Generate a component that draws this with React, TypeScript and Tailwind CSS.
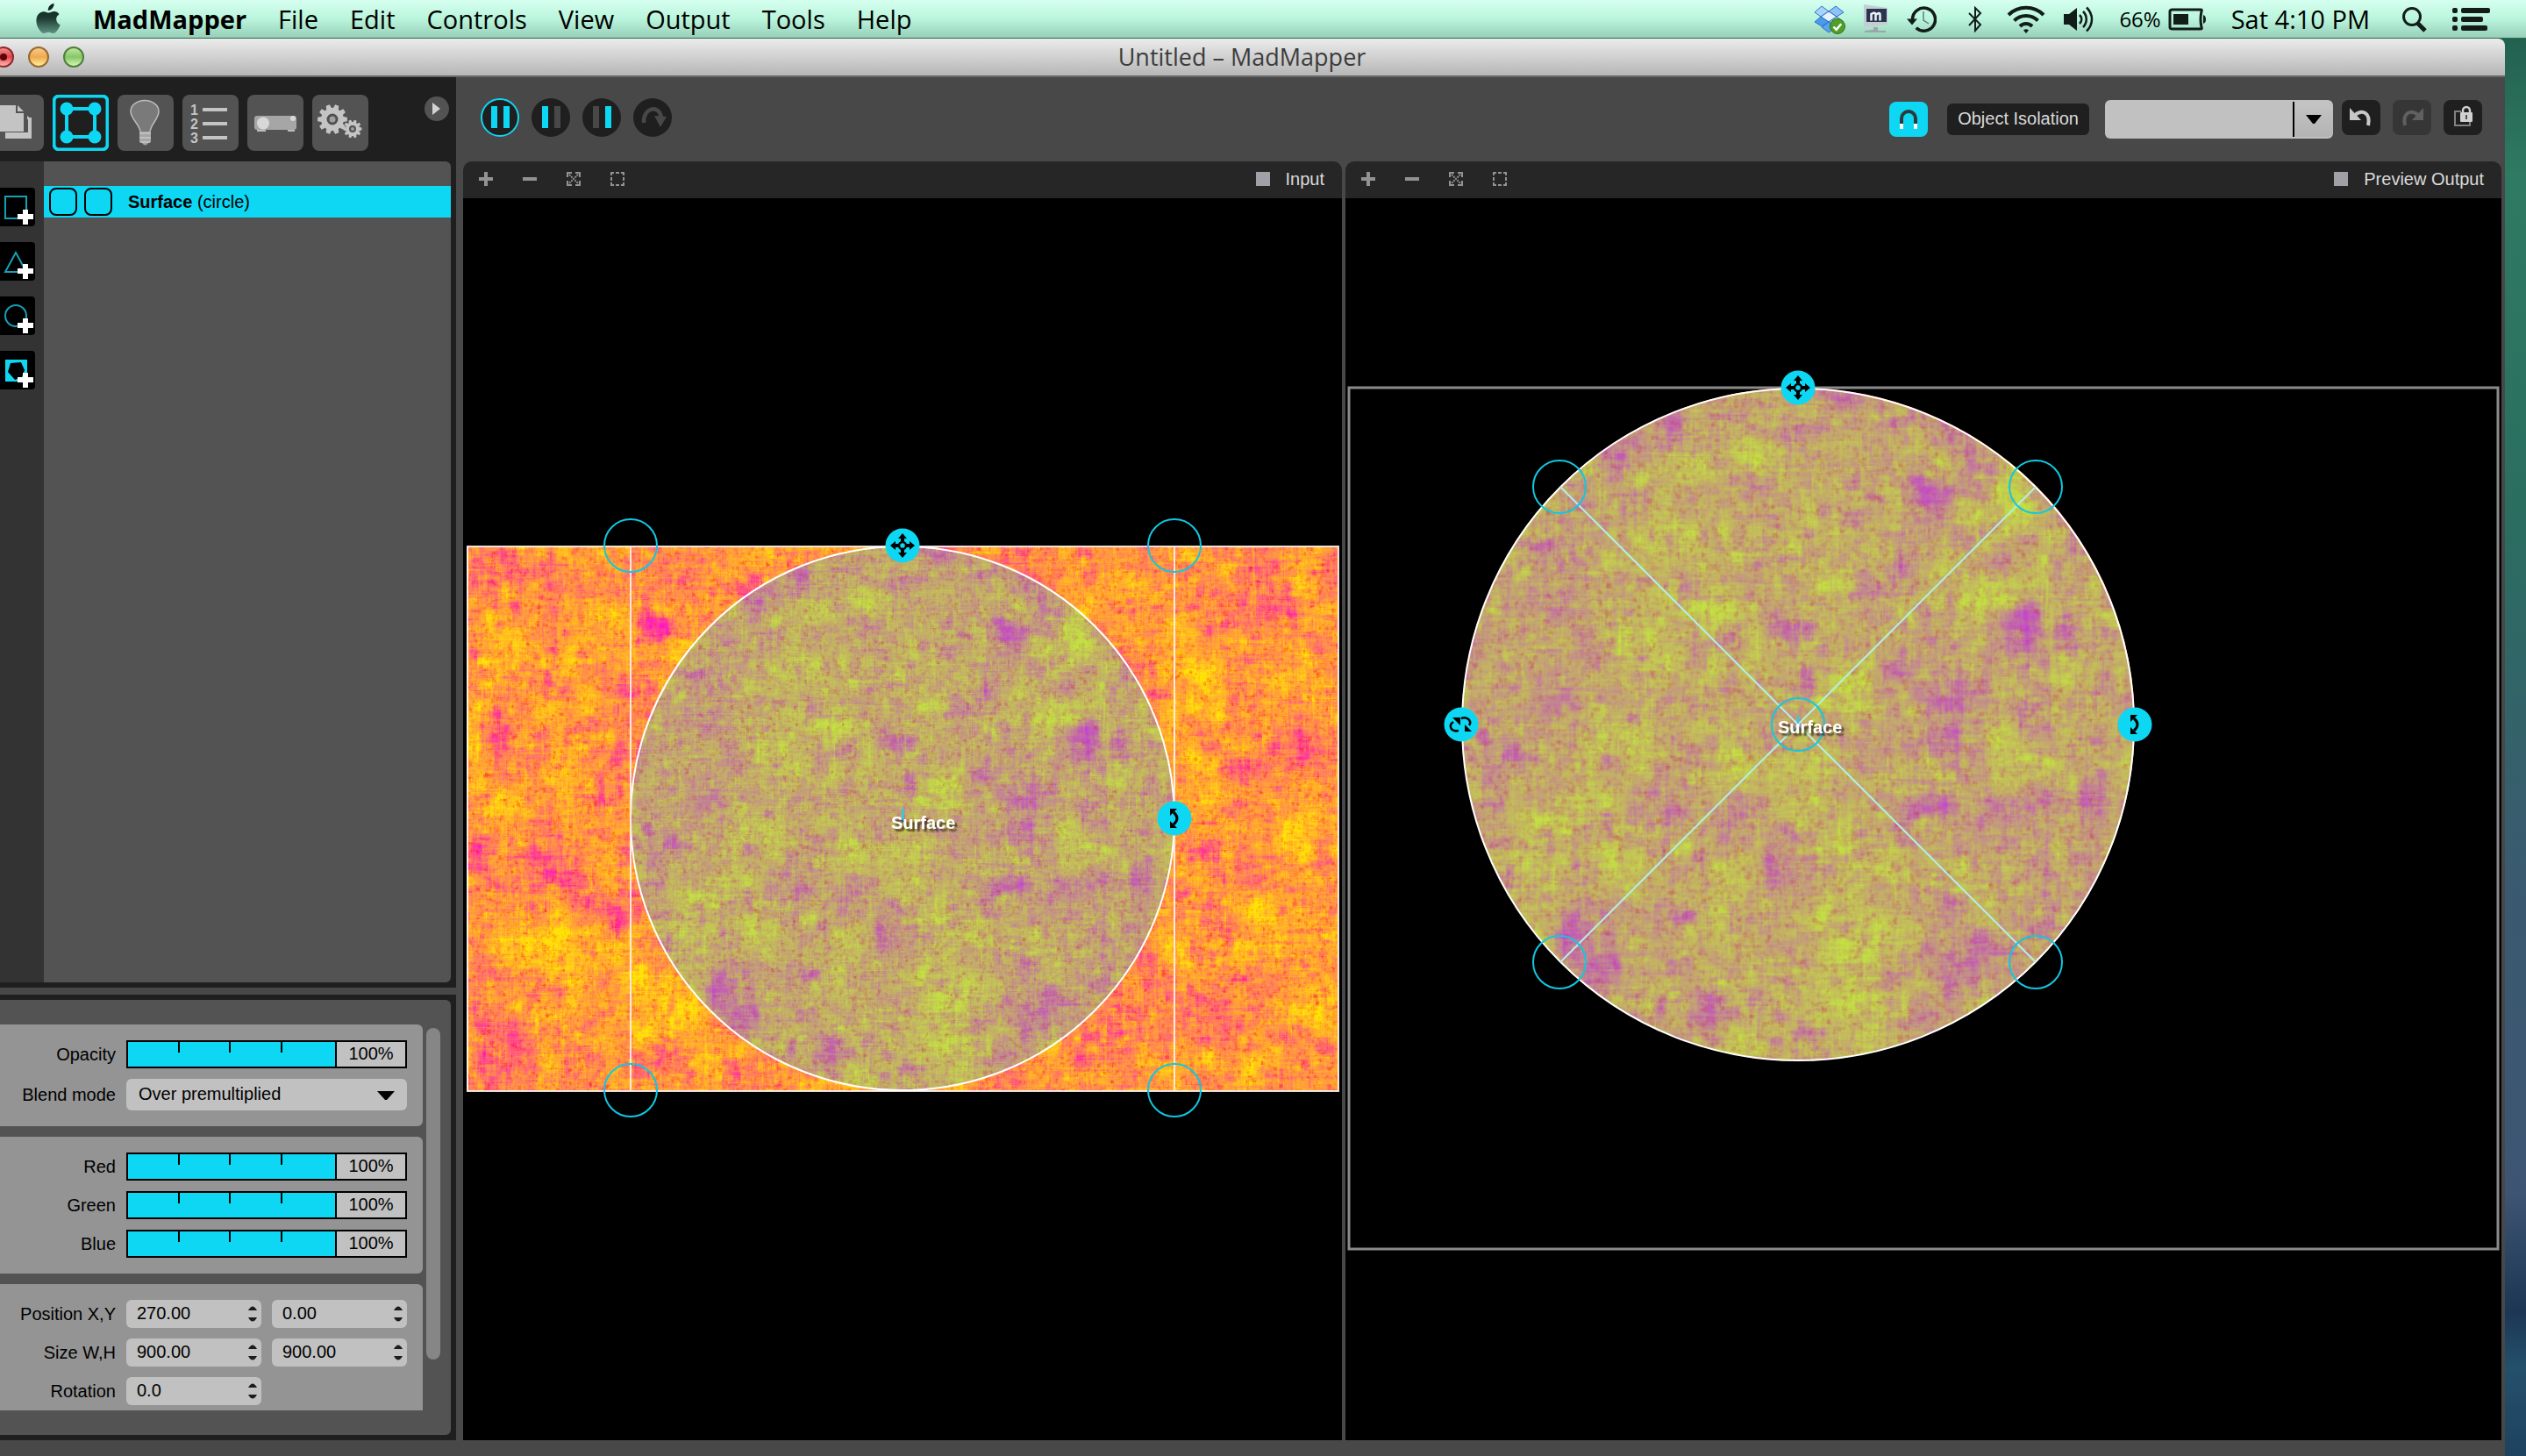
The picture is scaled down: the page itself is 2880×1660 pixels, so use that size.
import React, { useEffect, useId, useRef } from "react";

/* ---------- texture ---------- */

const TEX_W = 994;
const TEX_H = 621;

// [x, y, width, height, strength]; negative strength leans to magenta, positive to yellow
const BLOBS: number[][] = [
  [518, -2, 38, 26, -1], [376, 22, 18, 26, -0.9], [306, 46, 38, 26, -0.9], [597, 77, 40, 58, -1],
  [678, 205, 48, 48, -1], [736, 205, 28, 36, -0.8], [474, 204, 34, 30, -0.8], [224, 326, 24, 18, -0.8],
  [338, 373, 54, 36, -0.6], [596, 378, 50, 18, -0.9], [622, 322, 24, 36, -0.7], [706, 366, 28, 32, -0.7],
  [756, 356, 30, 50, -0.8], [395, 414, 14, 34, -0.8], [462, 418, 18, 44, -0.8], [290, 524, 44, 34, -1],
  [280, 486, 18, 34, -0.9], [400, 556, 32, 40, -0.8], [620, 284, 34, 16, -0.8], [258, 284, 34, 18, -0.6],
  [304, 342, 34, 18, -0.6], [384, 176, 24, 20, -0.7], [498, 256, 14, 32, -0.8], [204, 80, 34, 28, -1],
  [162, 406, 36, 40, -1], [826, 338, 30, 22, -1.1], [774, 158, 34, 16, -0.9], [382, 480, 28, 16, -0.8],
  [0, 0, 130, 60, -0.5], [20, 190, 40, 60, -0.7], [0, 320, 40, 60, -0.5], [60, 330, 80, 90, -0.4],
  [10, 540, 60, 70, -0.6], [800, 500, 110, 80, -0.5], [880, 60, 80, 40, -0.6], [946, 200, 40, 50, -0.7],
  [860, 240, 60, 30, -0.6], [180, 10, 100, 50, -0.5], [600, 470, 120, 100, -0.35], [220, 120, 100, 60, -0.2],
  [560, 10, 100, 40, -0.2], [450, 410, 60, 70, -0.4], [560, 230, 90, 60, -0.3], [180, 560, 60, 40, -0.6],
  [216, 102, 54, 46, 0.6], [330, 216, 62, 56, 0.5], [410, 424, 52, 56, 0.8], [660, 92, 54, 54, 0.5],
  [660, 176, 40, 36, 0.6], [656, 312, 56, 44, 0.6], [540, 400, 66, 60, 0.5], [540, 470, 66, 60, 0.4],
  [514, 552, 56, 38, 0.6], [182, 476, 30, 28, 1.2], [228, 506, 42, 40, 0.9], [188, 544, 28, 30, 0.9],
  [300, 314, 50, 40, 0.6], [290, 372, 50, 32, 0.6], [784, 440, 34, 46, 0.8], [734, 250, 38, 34, 0.6],
  [148, 60, 46, 34, 0.8], [402, 180, 40, 34, 0.6], [308, 414, 60, 48, 0.4], [124, 156, 26, 36, 0.8],
  [366, 60, 54, 28, 0.6], [20, 100, 70, 50, 0.6], [40, 420, 80, 90, 0.7], [90, 240, 60, 60, 0.6],
  [800, 120, 60, 90, 0.5], [860, 400, 90, 80, 0.6], [900, 130, 60, 50, 0.5], [810, 230, 50, 60, 0.5],
  [900, 300, 70, 60, 0.6], [940, 500, 54, 70, 0.6], [720, 30, 60, 40, 0.4], [30, 260, 40, 50, 0.6],
  [470, 330, 60, 50, 0.5], [440, 120, 80, 50, 0.4], [380, 250, 60, 60, 0.3], [340, 120, 60, 50, 0.4],
];

let cachedTexture: HTMLCanvasElement | null = null;

function buildTexture(): HTMLCanvasElement {
  if (cachedTexture) return cachedTexture;
  let seed = 90210;
  const rnd = () => {
    seed = (seed + 0x6d2b79f5) | 0;
    let t = Math.imul(seed ^ (seed >>> 15), 1 | seed);
    t = (t + Math.imul(t ^ (t >>> 7), 61 | t)) ^ t;
    return ((t ^ (t >>> 14)) >>> 0) / 4294967296;
  };
  const field = new Float32Array(TEX_W * TEX_H);
  const grain = new Float32Array(TEX_W * TEX_H);
  const stamp = (f: Float32Array, x: number, y: number, w: number, h: number, v: number) => {
    const x0 = Math.max(0, x | 0), y0 = Math.max(0, y | 0);
    const x1 = Math.min(TEX_W, (x + w) | 0), y1 = Math.min(TEX_H, (y + h) | 0);
    for (let j = y0; j < y1; j++) for (let i = x0; i < x1; i++) f[j * TEX_W + i] += v;
  };
  const scatter = (f: Float32Array, n: number, wa: number, wb: number, ha: number, hb: number, amp: number) => {
    for (let k = 0; k < n; k++) {
      const w = wa + rnd() * (wb - wa), h = ha + rnd() * (hb - ha);
      stamp(f, rnd() * (TEX_W + w) - w, rnd() * (TEX_H + h) - h, w, h, (rnd() * 2 - 1) * amp);
    }
  };
  scatter(field, 260, 70, 180, 60, 140, 0.02);
  scatter(field, 2200, 12, 40, 12, 40, 0.13);
  scatter(field, 16000, 4, 14, 4, 14, 0.13);
  scatter(field, 12000, 16, 50, 1, 3, 0.075);
  scatter(field, 12000, 1, 3, 16, 50, 0.075);
  scatter(grain, 90000, 2, 5, 2, 5, 0.22);
  for (const [x, y, w, h, s] of BLOBS) {
    for (let k = 0; k < 14; k++) {
      const g = 0.55 + rnd() * 0.6;
      stamp(field, x + (rnd() - 0.5) * w * 0.5 + (w * (1 - g)) / 2, y + (rnd() - 0.5) * h * 0.5 + (h * (1 - g)) / 2, w * g, h * g, s * 0.036);
    }
  }
  const stops = [
    [0, 255, 24, 200], [0.26, 255, 72, 140], [0.46, 255, 124, 96], [0.66, 255, 166, 50], [1, 255, 226, 8],
  ];
  const canvas = document.createElement("canvas");
  canvas.width = TEX_W;
  canvas.height = TEX_H;
  const ctx = canvas.getContext("2d")!;
  const img = ctx.createImageData(TEX_W, TEX_H);
  for (let p = 0; p < field.length; p++) {
    const t = Math.min(1, Math.max(0, 0.61 + field[p] * 0.68 + grain[p] * 0.14));
    let s = 1;
    while (s < stops.length - 1 && t > stops[s][0]) s++;
    const a = stops[s - 1], b = stops[s];
    const u = (t - a[0]) / (b[0] - a[0]);
    const red = Math.max(0, Math.min(0.7, -grain[p] * 0.9));
    img.data[p * 4] = 255;
    img.data[p * 4 + 1] = (a[2] + (b[2] - a[2]) * u) * (1 - red * 0.6);
    img.data[p * 4 + 2] = (a[3] + (b[3] - a[3]) * u) * (1 - red * 0.8);
    img.data[p * 4 + 3] = 255;
  }
  ctx.putImageData(img, 0, 0);
  cachedTexture = canvas;
  return canvas;
}

function Texture({ crop, width, height, className }: { crop: number[]; width: number; height: number; className: string }) {
  const ref = useRef<HTMLCanvasElement>(null);
  useEffect(() => {
    const ctx = ref.current!.getContext("2d")!;
    ctx.drawImage(buildTexture(), crop[0], crop[1], crop[2], crop[3], 0, 0, width, height);
  }, []);
  return <canvas ref={ref} width={width} height={height} className={className} />;
}

/* ---------- menu bar ---------- */

function AppleLogo() {
  return (
    <svg viewBox="0 0 30 36" className="h-9 w-[30px]" aria-hidden="true">
      <defs>
        <linearGradient id="apple" x1="0" y1="0" x2="0" y2="1">
          <stop offset="0" stopColor="#0c1f1a" />
          <stop offset=".5" stopColor="#1d3b33" />
          <stop offset="1" stopColor="#5f9482" />
        </linearGradient>
      </defs>
      <path fill="url(#apple)" d="M21.5 0c.3 2-.6 4-1.8 5.500-1.200 1.400-3.100 2.500-4.900 2.400-.3-1.900.6-3.900 1.700-5.200C17.800 1.200 19.800.2 21.500 0zM27.500 12.200c-2.200 1.400-3.400 3.300-3.300 5.800.1 2.900 1.600 5.100 4.400 6.400-.6 1.800-1.500 3.600-2.700 5.400-1.600 2.400-3.100 4.300-5.300 4.300-2.100 0-2.800-1.300-5.300-1.300s-3.300 1.300-5.300 1.300c-2.200 0-3.800-2.100-5.400-4.500C1.200 24.500.2 17.400 3.200 13c1.800-2.600 4.300-3.800 6.700-3.800 2.300 0 3.900 1.400 5.800 1.400 1.900 0 3.400-1.500 6.200-1.500 2.100 0 4.200 1 5.600 3.100z" />
    </svg>
  );
}

function DropboxIcon() {
  return (
    <svg viewBox="0 0 36 34" className="h-[34px] w-9" aria-hidden="true">
      <g stroke="#2d6fc4" strokeWidth="1" strokeLinejoin="round">
        <path fill="#a8d4fa" d="M9 2l8 6-9 6-7-5z" />
        <path fill="#8cc2f6" d="M25 2l-8 6 9 6 8-5z" />
        <path fill="#e4f2fe" d="M8 14l9-6 9 6-9 6z" />
        <path fill="#4b9bec" d="M8 14l-7 6 8 5 8-5z" />
        <path fill="#a8d4fa" d="M26 14l8 6-9 5-8-5z" />
        <path fill="#58a4ee" d="M9 26l8-6 8 6-8 6z" />
      </g>
      <circle cx="27" cy="25" r="8.500" fill="#4f9f28" stroke="#2f7412" />
      <path d="M22.500 25.500l3.200 3.300 5.500-6.500" fill="none" stroke="#fff" strokeWidth="2.500" />
    </svg>
  );
}

function DisplayIcon() {
  return (
    <svg viewBox="0 0 30 34" className="h-[34px] w-[30px]" aria-hidden="true">
      <path fill="#c4ced2" d="M1 0l27 4v19L1 26z" />
      <path fill="#2b3550" d="M4 5h23v15H4z" />
      <path d="M9.500 18.500V11q5-3 5 1v6.500M14.500 12q5-4 5 0v6.500" fill="none" stroke="#eef2f6" strokeWidth="2.500" />
      <path fill="#9aa6a8" d="M12 26h5v4h9v2H2v-2l10-1z" />
    </svg>
  );
}

function TimeMachineIcon() {
  return (
    <svg viewBox="0 0 34 34" className="size-[34px]" aria-hidden="true" fill="none">
      <path d="M6.500 17a13 13 0 1 1 4.200 9.700" stroke="#121c18" strokeWidth="3.500" />
      <path d="M0 16.500h12l-6 7z" fill="#121c18" />
      <path d="M19 8v10l6 4" stroke="#5c8274" strokeWidth="1.500" />
    </svg>
  );
}

function BluetoothIcon() {
  return (
    <svg viewBox="0 0 16 30" className="h-[30px] w-4" aria-hidden="true" fill="none">
      <path d="M1 8l13 13-6 7V2l6 6L1 22" stroke="#121c18" strokeWidth="2" />
    </svg>
  );
}

function WifiIcon() {
  return (
    <svg viewBox="0 0 44 34" className="h-[34px] w-11" aria-hidden="true" fill="none" stroke="#121c18" strokeWidth="4">
      <path d="M2 12C13 1 31 1 42 12" />
      <path d="M8.500 18.500c7.500-7.500 19.500-7.500 27 0" />
      <path d="M15 25c4-4 10-4 14 0" />
      <path d="M19 29.500a4.500 4.500 0 0 1 6 0L22 33z" fill="#121c18" stroke="none" />
    </svg>
  );
}

function VolumeIcon() {
  return (
    <svg viewBox="0 0 36 34" className="h-[34px] w-9" aria-hidden="true" fill="none" stroke="#121c18" strokeWidth="2.500">
      <path d="M1 11h6l9-7v26l-9-7H1z" fill="#121c18" stroke="none" />
      <path d="M19 12c3 3 3 7 0 10" />
      <path d="M23 8c5 5 5 13 0 18" />
      <path d="M27 3.500c8 8 8 19 0 27" />
    </svg>
  );
}

function BatteryIcon() {
  return (
    <svg viewBox="0 0 44 26" className="h-[26px] w-11" aria-hidden="true">
      <path d="M2 4q0-2 3-2h32q2 0 1 2-2 9 0 18 1 2-1 2H5q-3 0-3-2z" fill="none" stroke="#121c18" strokeWidth="3" />
      <path d="M6 7h17v12H6z" fill="#121c18" />
      <path d="M40 8q3 1 3 5t-3 5z" fill="#121c18" />
    </svg>
  );
}

const MENUS = ["File", "Edit", "Controls", "View", "Output", "Tools", "Help"];

function MenuBar() {
  return (
    <header className="flex h-11 shrink-0 items-center justify-between border-b border-[#2c6b52] bg-linear-to-b from-[#d6fff0] via-[#b9f5dc] to-[#98cfb8] pr-10 pl-10 font-['Open_Sans',sans-serif] text-[29px] leading-10 text-black">
      <nav className="flex items-center gap-9">
        <button aria-label="Apple menu"><AppleLogo /></button>
        <button className="font-bold">MadMapper</button>
        {MENUS.map((m) => <button key={m}>{m}</button>)}
      </nav>
      <div className="flex items-center gap-7">
        <div className="flex items-center gap-5 pr-2">
          <DropboxIcon />
          <DisplayIcon />
          <TimeMachineIcon />
        </div>
        <BluetoothIcon />
        <div className="flex items-center gap-5">
          <WifiIcon />
          <VolumeIcon />
        </div>
        <div className="flex items-center gap-2 text-2xl">
          <span>66%</span>
          <BatteryIcon />
        </div>
        <time className="pr-2">Sat 4:10 PM</time>
        <button aria-label="Search">
          <svg viewBox="0 0 30 30" className="size-[30px]" fill="none" stroke="#121c18">
            <circle cx="12" cy="12" r="9.500" strokeWidth="3" />
            <path d="M18 19l9 9" strokeWidth="5" />
          </svg>
        </button>
        <button aria-label="Notification center">
          <svg viewBox="0 0 44 28" className="h-7 w-11" fill="#121c18">
            <rect y="1" width="6" height="6" rx="2" /><rect x="10" y="1" width="33" height="6" rx="2" />
            <rect y="11" width="6" height="6" rx="2" /><rect x="10" y="11" width="25" height="6" rx="2" />
            <rect y="21" width="6" height="6" rx="2" /><rect x="10" y="21" width="30" height="6" rx="2" />
          </svg>
        </button>
      </div>
    </header>
  );
}

function TitleBar() {
  return (
    <div className="relative flex h-11 shrink-0 items-center justify-center rounded-t-lg border-b-2 border-[#686868] bg-linear-to-b from-[#ececec] to-[#b6b6b6]">
      <div className="absolute left-4 flex gap-4">
        <button aria-label="Close" className="grid size-6 place-items-center rounded-full border-2 border-[#8e2a2a] bg-linear-to-b from-[#f08a8a] via-[#e2414a] to-[#ffb4b4]">
          <span className="size-2 rounded-full bg-[#5c0508]" />
        </button>
        <button aria-label="Minimize" className="size-6 rounded-full border-2 border-[#9a6a30] bg-linear-to-b from-[#f7c98a] via-[#f0a94c] to-[#fff09a]" />
        <button aria-label="Zoom" className="size-6 rounded-full border-2 border-[#4e7f3a] bg-linear-to-b from-[#bce6a2] via-[#86c765] to-[#d5f7b5]" />
      </div>
      <h1 className="font-['Open_Sans',sans-serif] text-[27px] leading-9 text-[#3c3c3c]">Untitled – MadMapper</h1>
    </div>
  );
}

/* ---------- left column ---------- */

function PagesIcon() {
  return (
    <svg viewBox="0 0 64 64" className="size-16">
      <path fill="#c4c4c4" d="M20 50V43h26V26h4v24z" />
      <path fill="#c4c4c4" d="M8 12h24v9h9v21H8z" />
      <path fill="#c4c4c4" d="M34 12l7 7h-7zM45 24l5 4h-5z" />
    </svg>
  );
}

function SurfaceIcon() {
  return (
    <svg viewBox="0 0 64 64" className="size-16">
      <rect x="1.500" y="1.500" width="61" height="61" rx="6" fill="#1f1f1f" stroke="#0dd7f3" strokeWidth="4" />
      <rect x="16" y="16" width="32" height="32" fill="none" stroke="#0dd7f3" strokeWidth="4" />
      <g fill="#0dd7f3"><circle cx="16" cy="16" r="7.500" /><circle cx="48" cy="16" r="7.500" /><circle cx="16" cy="48" r="7.500" /><circle cx="48" cy="48" r="7.500" /></g>
    </svg>
  );
}

function BulbIcon() {
  return (
    <svg viewBox="0 0 64 64" className="size-16">
      <path d="M26 43c0-9-11-15-11-24a16 12.500 0 0 1 32 0c0 9-10 15-10 24z" fill="#7a7a7a" stroke="#bcbcbc" strokeWidth="1.500" />
      <path d="M25 44h13v10l-3 1q-3.500 5-7 0l-3-1z" fill="#a6a6a6" />
      <path d="M25 44h13M25 49h13M26 54h11" stroke="#c8c8c8" strokeWidth="1.500" />
    </svg>
  );
}

function ListIcon() {
  return (
    <svg viewBox="0 0 64 64" className="size-16">
      <g fill="#c4c4c4" fontFamily="Liberation Sans, sans-serif" fontWeight="700" fontSize="16">
        <text x="9" y="23">1</text><text x="9" y="39">2</text><text x="9" y="55">3</text>
      </g>
      <path d="M23 17h28M23 33h28M23 49h28" stroke="#c4c4c4" strokeWidth="4" />
    </svg>
  );
}

function ProjectorIcon() {
  return (
    <svg viewBox="0 0 64 64" className="size-16">
      <rect x="8" y="24" width="48" height="16" rx="3" fill="#a6a6a6" />
      <path d="M11 40h10v2H11zM46 40h8v2h-8z" fill="#bcbcbc" />
      <circle cx="18" cy="32.500" r="7" fill="#d8d8d8" />
      <circle cx="52" cy="27" r="3" fill="#d8d8d8" />
    </svg>
  );
}

function gearPath(cx: number, cy: number, r: number, teeth: number) {
  const pts: string[] = [];
  for (let i = 0; i < teeth; i++) {
    const a = (i / teeth) * Math.PI * 2;
    const s = Math.PI / teeth;
    for (const [o, k] of [[-0.75, 0.76], [-0.42, 1], [0.42, 1], [0.75, 0.76]]) {
      pts.push(`${(cx + Math.cos(a + s * o) * r * k).toFixed(1)},${(cy + Math.sin(a + s * o) * r * k).toFixed(1)}`);
    }
  }
  return pts.join(" ");
}

function GearsIcon() {
  return (
    <svg viewBox="0 0 64 64" className="size-16">
      <polygon points={gearPath(23, 28, 17, 10)} fill="#c4c4c4" />
      <circle cx="23" cy="28" r="5" fill="#a0a0a0" stroke="#505050" strokeWidth="3" />
      <polygon points={gearPath(46, 39, 10.5, 10)} fill="#c4c4c4" />
      <circle cx="46" cy="39" r="3" fill="#a0a0a0" stroke="#505050" strokeWidth="2" />
    </svg>
  );
}

const TABS = [
  { label: "Media", icon: <PagesIcon /> },
  { label: "Surfaces", icon: <SurfaceIcon /> },
  { label: "Fixtures", icon: <BulbIcon /> },
  { label: "Cues", icon: <ListIcon /> },
  { label: "Projectors", icon: <ProjectorIcon /> },
  { label: "Preferences", icon: <GearsIcon /> },
];

const SHAPES = [
  { label: "Add quad", shape: <rect x="6" y="10" width="24" height="25" fill="none" stroke="#12a2b8" strokeWidth="2" /> },
  { label: "Add triangle", shape: <path d="M18 12l12 22H6z" fill="none" stroke="#12a2b8" strokeWidth="2" /> },
  { label: "Add circle", shape: <circle cx="18" cy="22" r="12" fill="none" stroke="#12a2b8" strokeWidth="2" /> },
  {
    label: "Add mask",
    shape: (
      <>
        <rect x="6" y="10" width="25" height="25" fill="#0dd7f3" />
        <path d="M12 14l12-1 4 9-3 8-8 3-8-9z" fill="#000" />
      </>
    ),
  },
];

function SurfacesPanel() {
  return (
    <section className="flex min-h-0 flex-1 flex-col bg-[#1f1f1f] pr-1.5 pb-1.5">
      <div className="flex h-24 shrink-0 items-start justify-between pr-0.5">
        <div className="flex gap-2.5 pt-5 pl-2.5">
          {TABS.map((t) => (
            <button key={t.label} aria-label={t.label} className="size-16 rounded-lg bg-[#535353]">{t.icon}</button>
          ))}
        </div>
        <button aria-label="Collapse" className="mt-[22px] grid size-7 place-items-center rounded-full bg-[#535353]">
          <svg viewBox="0 0 10 14" className="h-3.5 w-2.5"><path d="M0 0l9 7-9 7z" fill="#d2d2d2" /></svg>
        </button>
      </div>
      <div className="flex min-h-0 flex-1 overflow-hidden rounded-r-md bg-[#535353]">
        <div className="flex w-[74px] flex-col items-end gap-[18px] bg-[#333] pt-[30px] pr-2.5">
          {SHAPES.map((s) => (
            <button key={s.label} aria-label={s.label} className="h-11 w-10 rounded-r-sm bg-black">
              <svg viewBox="0 0 40 44" className="h-11 w-10">
                {s.shape}
                <path d="M26 25h6v5h6v6h-6v6h-6v-6h-6v-6h6z" fill="#fff" />
              </svg>
            </button>
          ))}
        </div>
        <ul className="flex-1 pt-7">
          <li className="flex h-9 items-center gap-2 bg-[#0dd7f3] pl-1.5 font-['Liberation_Sans',sans-serif] text-xl leading-6 text-black">
            <input type="checkbox" aria-label="Solo" className="size-8 appearance-none rounded-lg border-2 border-black" />
            <input type="checkbox" aria-label="Visible" className="size-8 appearance-none rounded-lg border-2 border-black" />
            <span className="pl-2.5"><b>Surface</b> (circle)</span>
          </li>
        </ul>
      </div>
    </section>
  );
}

function Row({ label, id, children }: { label: string; id: string; children: React.ReactNode }) {
  return (
    <div className="flex items-center gap-3">
      <label htmlFor={id} className="w-[156px] shrink-0 text-right">{label}</label>
      {children}
    </div>
  );
}

function SliderRow({ label }: { label: string }) {
  const id = useId();
  return (
    <Row label={label} id={id}>
      <div className="flex h-8 flex-1 border-2 border-black bg-black">
        <div className="relative flex-1">
          <input id={id} type="range" defaultValue={100} className="block size-full appearance-none bg-[#0dd7f3] [&::-webkit-slider-thumb]:w-0 [&::-webkit-slider-thumb]:appearance-none" />
          <div className="pointer-events-none absolute inset-x-0 top-0 flex h-3 justify-evenly pr-1">
            <i className="w-0.5 bg-black" /><i className="w-0.5 bg-black" /><i className="w-0.5 bg-black" />
          </div>
        </div>
        <output htmlFor={id} className="ml-0.5 w-[78px] bg-[#c1c1c1] text-center leading-[26px]">100%</output>
      </div>
    </Row>
  );
}

function NumberField({ id, label, value }: { id?: string; label?: string; value: string }) {
  return (
    <div className="relative h-8 w-[154px]">
      <input id={id} aria-label={label} defaultValue={value} className="size-full rounded-md bg-[#c1c1c1] pr-8 pb-0.5 pl-3 text-black outline-none" />
      <svg viewBox="0 0 12 20" className="absolute top-1.5 right-1 h-5 w-3" aria-hidden="true">
        <path d="M1 6q5-9 10 0zM1 14q5 9 10 0z" fill="#1c1c1c" />
      </svg>
    </div>
  );
}

function Group({ children }: { children: React.ReactNode }) {
  return <div className="flex shrink-0 flex-col gap-3 rounded-r-md bg-[#949494] py-[18px] pr-[18px]">{children}</div>;
}

function PropertiesPanel() {
  const blend = useId(), px = useId(), sw = useId(), rot = useId();
  return (
    <section className="h-[508px] shrink-0 bg-[#1f1f1f] py-1.5 pr-1.5 font-['Liberation_Sans',sans-serif] text-xl leading-6 text-black">
      <div className="flex h-full gap-1 rounded-r-md bg-[#535353] py-7 pr-3">
        <div className="flex flex-1 flex-col gap-3 overflow-hidden">
          <Group>
            <SliderRow label="Opacity" />
            <Row label="Blend mode" id={blend}>
              <div className="relative h-9 flex-1">
                <select id={blend} className="size-full appearance-none rounded-md bg-[#c1c1c1] pb-0.5 pl-3.5">
                  <option>Over premultiplied</option>
                </select>
                <svg viewBox="0 0 20 10" className="pointer-events-none absolute top-3.5 right-3.5 h-2.5 w-5"><path d="M0 0h20L11 10H9z" fill="#000" /></svg>
              </div>
            </Row>
          </Group>
          <Group>
            <SliderRow label="Red" />
            <SliderRow label="Green" />
            <SliderRow label="Blue" />
          </Group>
          <Group>
            <Row label="Position X,Y" id={px}>
              <NumberField id={px} value="270.00" />
              <NumberField label="Position Y" value="0.00" />
            </Row>
            <Row label="Size W,H" id={sw}>
              <NumberField id={sw} value="900.00" />
              <NumberField label="Height" value="900.00" />
            </Row>
            <Row label="Rotation" id={rot}>
              <NumberField id={rot} value="0.0" />
            </Row>
          </Group>
        </div>
        <div className="mt-1 h-[378px] w-4 rounded-lg bg-[#868686]" />
      </div>
    </section>
  );
}

/* ---------- toolbar ---------- */

function PauseButton({ label, ring, left, right }: { label: string; ring?: boolean; left: string; right: string }) {
  return (
    <button aria-label={label}>
      <svg viewBox="0 0 44 44" className="size-11">
        <circle cx="22" cy="22" r={ring ? 21 : 22} fill="#1f1f1f" stroke={ring ? "#0dd7f3" : "none"} strokeWidth="2" />
        <rect x="12" y="9" width="7" height="25" fill={left} />
        <rect x="26" y="9" width="7" height="25" fill={right} />
      </svg>
    </button>
  );
}

function ArrowIcon({ color, flip }: { color: string; flip?: boolean }) {
  return (
    <svg viewBox="0 0 44 40" className={flip ? "h-10 w-11 -scale-x-100" : "h-10 w-11"}>
      <path d="M15 17c9-7 18-2 15 12" fill="none" stroke={color} strokeWidth="4" />
      <path d="M9 9v14h13z" fill={color} />
    </svg>
  );
}

function Toolbar() {
  return (
    <div className="flex h-24 shrink-0 items-start justify-between pr-[26px] pl-7">
      <div className="flex gap-3.5 pt-6">
        <PauseButton label="Pause all" ring left="#0dd7f3" right="#0dd7f3" />
        <PauseButton label="Pause input" left="#0dd7f3" right="#484848" />
        <PauseButton label="Pause output" left="#484848" right="#0dd7f3" />
        <button aria-label="Resume">
          <svg viewBox="0 0 44 44" className="size-11">
            <circle cx="22" cy="22" r="22" fill="#1f1f1f" />
            <path d="M12 28c-1-18 18-21 20-6" fill="none" stroke="#484848" strokeWidth="4.500" />
            <path d="M24 20l14 1-7 12z" fill="#484848" />
          </svg>
        </button>
      </div>
      <div className="mt-[26px] flex h-11 items-center">
        <button aria-label="Snap" className="grid h-10 w-11 place-items-center rounded-lg bg-[#0dd7f3]">
          <svg viewBox="0 0 20 22" className="h-[22px] w-5" fill="none" strokeWidth="4">
            <path d="M2 16V10a8 8 0 0 1 16 0v6" stroke="#2d3a3c" />
            <path d="M2 16v6M18 16v6" stroke="#fff" />
          </svg>
        </button>
        <button className="ml-[22px] h-9 rounded-md bg-[#1f1f1f] px-3 pb-0.5 font-['Liberation_Sans',sans-serif] text-xl leading-6 text-[#dadada]">Object Isolation</button>
        <div className="relative ml-[18px] h-11 w-[260px]">
          <select aria-label="Preset" className="size-full appearance-none rounded-md bg-[#c1c1c1]"><option value=""></option></select>
          <div className="pointer-events-none absolute inset-y-0.5 right-0 grid w-[46px] place-items-center rounded-r-md border-l-2 border-black bg-linear-to-b from-[#c4c4c4] to-[#b4b4b4]">
            <svg viewBox="0 0 18 10" className="h-2.5 w-[18px]"><path d="M0 0h18l-8 10H8z" fill="#000" /></svg>
          </div>
        </div>
        <div className="ml-2.5 flex gap-3.5 self-start">
          <button aria-label="Undo" className="rounded-lg bg-[#1f1f1f]"><ArrowIcon color="#c8c8c8" /></button>
          <button aria-label="Redo" className="rounded-lg bg-[#363636]"><ArrowIcon color="#606060" flip /></button>
          <button aria-label="Lock" className="rounded-lg bg-[#1f1f1f]">
            <svg viewBox="0 0 44 40" className="h-10 w-11">
              <path d="M20 13h-7v16h17v-4" fill="none" stroke="#808080" strokeWidth="2" />
              <path d="M22 16v-4a4 4 0 0 1 8 0v4" fill="none" stroke="#d0d0d0" strokeWidth="2.500" />
              <rect x="19" y="14" width="14" height="11" rx="1" fill="#d0d0d0" />
              <rect x="25" y="17" width="2" height="5" fill="#505050" />
            </svg>
          </button>
        </div>
      </div>
    </div>
  );
}

/* ---------- views ---------- */

function ViewHeader({ title }: { title: string }) {
  return (
    <div className="flex h-[42px] shrink-0 items-center justify-between rounded-t-[10px] bg-[#262626] pr-5 pb-0.5 pl-[18px]">
      <div className="flex gap-[34px] text-[#929292]">
        <button aria-label="Zoom in"><svg viewBox="0 0 16 16" className="size-4" fill="currentColor"><path d="M6 0h4v6h6v4h-6v6H6v-6H0V6h6z" /></svg></button>
        <button aria-label="Zoom out"><svg viewBox="0 0 16 16" className="size-4" fill="currentColor"><path d="M0 6h16v4H0z" /></svg></button>
        <button aria-label="Fit">
          <svg viewBox="0 0 16 16" className="size-4" fill="none" stroke="currentColor" strokeWidth="2">
            <path d="M1 6V1h5M10 1h5v5M15 10v5h-5M6 15H1v-5" />
            <path d="M3 3l10 10M13 3L3 13" strokeDasharray="2 1" />
          </svg>
        </button>
        <button aria-label="Frame selection">
          <svg viewBox="0 0 16 16" className="size-4" fill="currentColor">
            <path d="M0 0h4v2H2v2H0zM6 0h4v2H6zM12 0h4v4h-2V2h-2zM0 6h2v4H0zM14 6h2v4h-2zM0 12h2v2h2v2H0zM6 14h4v2H6zM14 12h2v4h-4v-2h2z" />
          </svg>
        </button>
      </div>
      <div className="flex items-center gap-[18px]">
        <span className="size-4 bg-[#a0a0a6]" />
        <h2 className="font-['Liberation_Sans',sans-serif] text-xl leading-6 text-[#dadada]">{title}</h2>
      </div>
    </div>
  );
}

function MoveHandle({ x, y }: { x: number; y: number }) {
  return (
    <g transform={`translate(${x} ${y})`}>
      <circle r="19.500" fill="#0dd7f3" />
      <circle r="4" fill="none" stroke="#000" strokeWidth="2.500" />
      <path d="M0-14l5 6h-3v3h-4v-3h-3zM0 14l5-6h-3v-3h-4v3h-3zM-14 0l6-5v3h3v4h-3v3zM14 0l-6-5v3h-3v4h3v3z" fill="#000" />
    </g>
  );
}

function StretchHandle({ x, y }: { x: number; y: number }) {
  return (
    <g transform={`translate(${x} ${y})`}>
      <circle r="19.500" fill="#0dd7f3" />
      <path d="M-1-7Q7 0-1 7" fill="none" stroke="#000" strokeWidth="3" />
      <path d="M-5-11h8l-8 8zM-5 11h8l-8-8z" fill="#000" />
    </g>
  );
}

function RotateHandle({ x, y }: { x: number; y: number }) {
  return (
    <g transform={`translate(${x} ${y})`}>
      <circle r="19.500" fill="#0dd7f3" />
      <path d="M-3 7c-9 2-12-6-6-10M0-7c8-3 12 4 9 8" fill="none" stroke="#000" strokeWidth="2.500" />
      <path d="M-10-8h9v9zM12 8H4V0z" fill="#000" />
    </g>
  );
}

function Rings({ points }: { points: number[][] }) {
  return (
    <g fill="none" stroke="#10c8e2" strokeWidth="2">
      {points.map(([x, y]) => <circle key={`${x}-${y}`} cx={x} cy={y} r="30" />)}
    </g>
  );
}

function SurfaceLabel({ x, y }: { x: number; y: number }) {
  return (
    <text x={x} y={y} fill="#fff" className="font-['Liberation_Sans',sans-serif] text-xl font-bold [text-shadow:3px_3px_2px_rgba(0,0,0,.6)]">Surface</text>
  );
}

function InputView() {
  return (
    <svg viewBox="0 0 1002 1416" className="block size-full bg-black" role="img" aria-label="Input view">
      <foreignObject x="4" y="397" width="994" height="621">
        <Texture crop={[0, 0, TEX_W, TEX_H]} width={994} height={621} className="block" />
      </foreignObject>
      <rect x="5" y="397" width="993" height="621" fill="none" stroke="#fff" strokeOpacity=".85" strokeWidth="2" />
      <circle cx="501" cy="707" r="310" fill="#10d8f8" fillOpacity=".25" stroke="#fff" strokeWidth="2" />
      <path d="M191 397v621M811 397v621" stroke="#ffe9df" strokeWidth="2" />
      <path d="M501 696v14" stroke="#0dd7f3" strokeWidth="2" />
      <Rings points={[[191, 396], [811, 396], [191, 1017], [811, 1017]]} />
      <SurfaceLabel x={488} y={719} />
      <MoveHandle x={501} y={396} />
      <StretchHandle x={811} y={707} />
    </svg>
  );
}

function OutputView() {
  return (
    <svg viewBox="0 0 1318 1416" className="block size-full bg-black" role="img" aria-label="Output view">
      <rect x="4" y="216" width="1310" height="982" fill="none" stroke="#8a8a8a" strokeWidth="3" />
      <foreignObject x="133" y="216" width="767" height="767">
        <Texture crop={[187, 0, 621, 621]} width={767} height={767} className="block rounded-full" />
      </foreignObject>
      <circle cx="516" cy="600" r="383" fill="#10d8f8" fillOpacity=".25" stroke="#fff" strokeWidth="2" />
      <path d="M245 329l542 542M787 329L245 871" stroke="#b4eee6" strokeWidth="2" />
      <Rings points={[[244, 329], [787, 329], [244, 871], [787, 871], [516, 600]]} />
      <path d="M516 590v14" stroke="#0dd7f3" strokeWidth="2" />
      <SurfaceLabel x={493} y={610} />
      <MoveHandle x={516} y={216} />
      <RotateHandle x={132} y={600} />
      <StretchHandle x={900} y={600} />
    </svg>
  );
}

export default function App() {
  return (
    <div className="flex h-screen flex-col overflow-hidden bg-[linear-gradient(180deg,#1f5a4a_0%,#2f7a62_12%,#2a6e60_35%,#3a5a70_60%,#3d5573_82%,#1c3654_90%,#24506c_94%,#1e4260_100%)]">
      <MenuBar />
      <div className="mr-6 -ml-6 flex min-h-0 flex-1 flex-col">
        <TitleBar />
        <div className="flex min-h-0 flex-1 bg-[#484848] pb-[18px]">
          <aside className="flex w-[544px] shrink-0 flex-col gap-2">
            <SurfacesPanel />
            <PropertiesPanel />
          </aside>
          <main className="flex min-w-0 flex-1 flex-col">
            <Toolbar />
            <div className="flex min-h-0 flex-1 gap-1 pr-1 pl-2">
              <section className="flex min-w-0 flex-[1002] flex-col">
                <ViewHeader title="Input" />
                <div className="min-h-0 flex-1"><InputView /></div>
              </section>
              <section className="flex min-w-0 flex-[1318] flex-col">
                <ViewHeader title="Preview Output" />
                <div className="min-h-0 flex-1"><OutputView /></div>
              </section>
            </div>
          </main>
        </div>
      </div>
    </div>
  );
}
